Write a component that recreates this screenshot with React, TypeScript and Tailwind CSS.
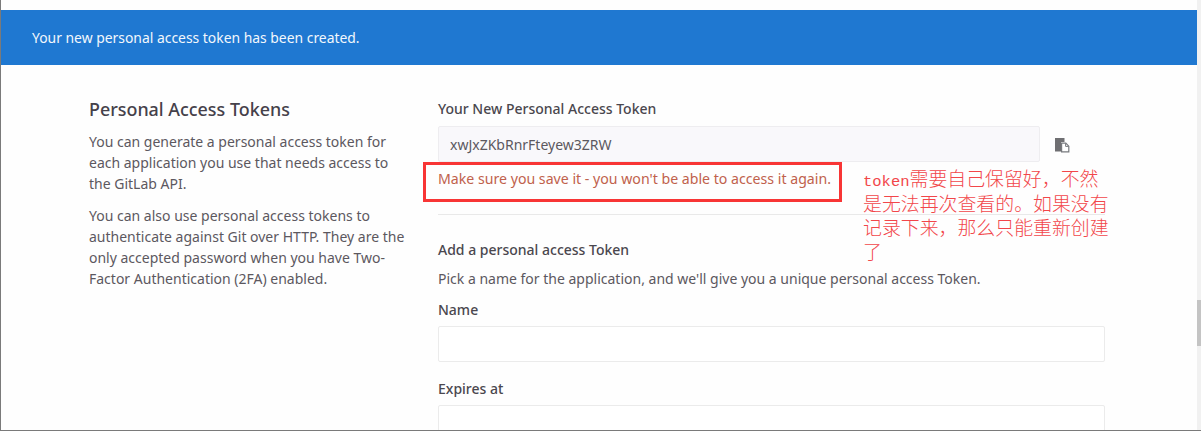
import React from 'react'

const CopyIcon: React.FC = () => (
  <svg width="16" height="16" viewBox="0 0 16 16" aria-hidden="true">
    <path d="M1 1h9.5v4H7v9.5H1z" fill="#6f6f72" />
    <path d="M7.6 6.2h4.2l3 3v5.6H7.6z" fill="#fff" stroke="#77797d" strokeWidth="1.2" />
    <path d="M11.6 6.4v3h3" fill="none" stroke="#77797d" strokeWidth="1" />
  </svg>
)

const App: React.FC = () => {
  return (
    <div className="relative flex h-[431px] w-[1201px] overflow-hidden border-b border-l border-[#7a7a7a] bg-[#fefefe] font-['Noto_Sans','Open_Sans',sans-serif] text-[14px] leading-[21px] text-[#5c585f]">
      <div className="flex-1 pt-[10px]">
        <div className="flex h-[55px] items-center bg-[#1f78d1] pl-[31px] text-[13.9px] text-[#f2f7fc]">
          Your new personal access token has been created.
        </div>

        <div className="flex pt-[33px] pl-[88px]">
          <div className="w-[349px] shrink-0 pr-[30px]">
            <h4 className="text-[17.9px] leading-[22px] font-medium text-[#45414a]">Personal Access Tokens</h4>
            <p className="mt-[11px]">
              You can generate a personal access token for each application you use that needs access to the GitLab API.
            </p>
            <p className="mt-[11px]">
              You can also use personal access tokens to authenticate against Git over HTTP. They are the only accepted password when you have Two-Factor Authentication (2FA) enabled.
            </p>
          </div>

          <div className="w-[667px] shrink-0">
            <label className="block font-medium text-[#4a474e]">Your New Personal Access Token</label>
            <div className="mt-[7px] flex items-center">
              <input
                readOnly
                value="xwJxZKbRnrFteyew3ZRW"
                className="h-[36px] w-[602px] rounded-[2px] border border-[#eeedf0] bg-[#f9f8fb] px-[11px] text-[#5c585f] outline-none"
              />
              <span className="ml-[14px] mt-[2px]"><CopyIcon /></span>
            </div>
            <p className="mt-[6px] text-[14.15px] text-[#c0614c]">Make sure you save it - you won't be able to access it again.</p>
            <hr className="mt-[25px] border-[#e9e9e9]" />

            <label className="mt-[24px] block font-medium text-[#4a474e]">Add a personal access Token</label>
            <p className="mt-[8px]">Pick a name for the application, and we'll give you a unique personal access Token.</p>
            <label className="mt-[10px] block font-medium text-[#4a474e]">Name</label>
            <input className="mt-[6px] block h-[36px] w-full rounded-[2px] border border-[#ebebeb] bg-white outline-none" />
            <label className="mt-[16px] block font-medium text-[#4a474e]">Expires at</label>
            <input className="mt-[6px] block h-[36px] w-full rounded-[2px] border border-[#ebebeb] bg-white outline-none" />
          </div>
        </div>
      </div>

      <div className="w-[4px] shrink-0 bg-[#f1f1f1] pt-[300px]">
        <div className="h-[46px] bg-[#c4c4c4]" />
      </div>

      {/* annotations drawn over the screenshot */}
      <div className="absolute top-[162px] left-[422px] h-[40px] w-[419px] border-[3px] border-[#f83535]" />
      <div className="absolute top-[166px] left-[862px] w-[250px] font-['Noto_Sans_CJK_SC',sans-serif] text-[18.9px] leading-[24px] font-light text-[#f2464a]">
        <span className="font-['Liberation_Mono',monospace] text-[15.5px] leading-none">token</span>需要自己保留好，不然是无法再次查看的。如果没有记录下来，那么只能重新创建了
      </div>
    </div>
  )
}

export default App
